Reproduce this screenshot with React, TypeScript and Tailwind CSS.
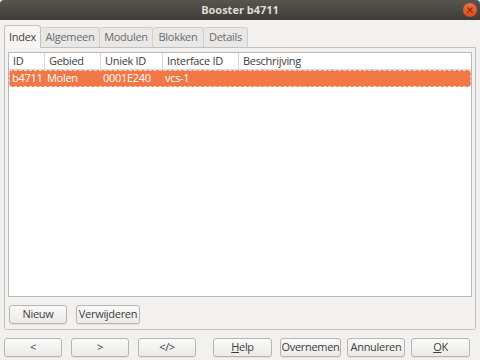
import React from 'react';

const font = { fontFamily: '"Open Sans", "Noto Sans", "DejaVu Sans", sans-serif' };

function Btn({ children, className = '' }: { children: React.ReactNode; className?: string }) {
  return (
    <div
      className={`flex items-center justify-center h-[19px] rounded-[3px] border border-[#b7b5b1] bg-gradient-to-b from-[#fafaf9] to-[#ebeae8] text-[11px] tracking-[-0.3px] text-[#3c3c3c] shadow-[0_1px_0_rgba(0,0,0,0.06)] ${className}`}
    >
      {children}
    </div>
  );
}

const tabs = ['Index', 'Algemeen', 'Modulen', 'Blokken', 'Details'];
const tabW = ['w-[37px]', 'w-[59px]', 'w-[53px]', 'w-[51px]', 'w-[44px]'];

const cols = [
  { label: 'ID', w: 'w-[36px]', v: 'b4711' },
  { label: 'Gebied', w: 'w-[56px]', v: 'Molen' },
  { label: 'Uniek ID', w: 'w-[62px]', v: '0001E240' },
  { label: 'Interface ID', w: 'w-[76px]', v: 'vcs-1' },
  { label: 'Beschrijving', w: 'flex-1', v: '' },
];

export default function App() {
  return (
    <div className="w-[480px] h-[360px] bg-[#f2f1f0] flex flex-col overflow-hidden" style={font}>
      {/* title bar */}
      <div className="relative h-[20px] flex items-center justify-center bg-gradient-to-b from-[#57554f] to-[#3d3c38] rounded-t-[4px]">
        <span className="text-[11px] font-bold text-[#dfdbd2]">Booster b4711</span>
        <div className="absolute right-[3px] top-[3px] w-[14px] h-[14px] rounded-full bg-gradient-to-b from-[#f0703f] to-[#dc4a1c] flex items-center justify-center">
          <svg width="6" height="6" viewBox="0 0 6 6">
            <path d="M0.5 0.5 L5.5 5.5 M5.5 0.5 L0.5 5.5" stroke="#8a2a0a" strokeWidth="1.2" />
          </svg>
        </div>
      </div>

      {/* tabs */}
      <div className="flex items-end pl-[4px] pt-[4px] h-[27px] tracking-[-0.3px]">
        {tabs.map((t, i) =>
          i === 0 ? (
            <div
              key={t}
              className={`${tabW[i]} h-[23px] -mb-px z-10 flex items-center justify-center border border-b-0 border-[#c3c1bd] rounded-t-[3px] bg-[#f6f5f4] text-[11px] text-[#3c3c3c]`}
            >
              {t}
            </div>
          ) : (
            <div
              key={t}
              className={`${tabW[i]} h-[20px] flex items-center justify-center border border-b-0 border-l-0 border-[#d0cecb] rounded-t-[3px] bg-[#e9e8e6] text-[11px] text-[#6b6b6b]`}
            >
              {t}
            </div>
          ),
        )}
      </div>

      {/* panel */}
      <div className="mx-[4px] h-[283px] border border-[#c3c1bd] rounded-b-[3px] bg-[#f2f1f0] flex flex-col px-[3px] pt-[4px]">
        <div className="h-[245px] border border-[#b9b7b3] bg-white flex flex-col tracking-[-0.3px]">
          <div className="flex h-[17px] border-b border-[#d8d7d4] text-[11px] text-[#3c3c3c]">
            {cols.map((c, i) => (
              <div key={c.label} className={`${c.w} flex items-center px-[4px] ${i < cols.length - 1 ? 'border-r border-[#d8d7d4]' : ''}`}>
                {c.label}
              </div>
            ))}
          </div>
          <div className="flex h-[17px] bg-[#f07746] border border-dashed border-[#fbd3c3] text-[11px] text-white">
            {cols.map((c, i) => (
              <div key={c.label} className={`${i === 0 ? 'w-[35px]' : c.w} flex items-center px-[2px]`}>
                {c.v}
              </div>
            ))}
          </div>
        </div>
        <div className="flex gap-[9px] mt-[8px] pl-[1px]">
          <Btn className="w-[58px]">Nieuw</Btn>
          <Btn className="w-[64px]">Verwijderen</Btn>
        </div>
      </div>

      {/* bottom buttons */}
      <div className="flex items-center mt-[8px] pl-[4px]">
        <Btn className="w-[58px]">&lt;</Btn>
        <Btn className="w-[58px] ml-[9px]">&gt;</Btn>
        <Btn className="w-[58px] ml-[9px]">&lt;/&gt;</Btn>
        <Btn className="w-[59px] ml-[17px]">
          <span className="underline">H</span>elp
        </Btn>
        <Btn className="w-[61px] ml-[8px]">Overnemen</Btn>
        <Btn className="w-[58px] ml-[6px]">Annuleren</Btn>
        <Btn className="w-[59px] ml-[6px]">
          <span className="underline">O</span>K
        </Btn>
      </div>
    </div>
  );
}
